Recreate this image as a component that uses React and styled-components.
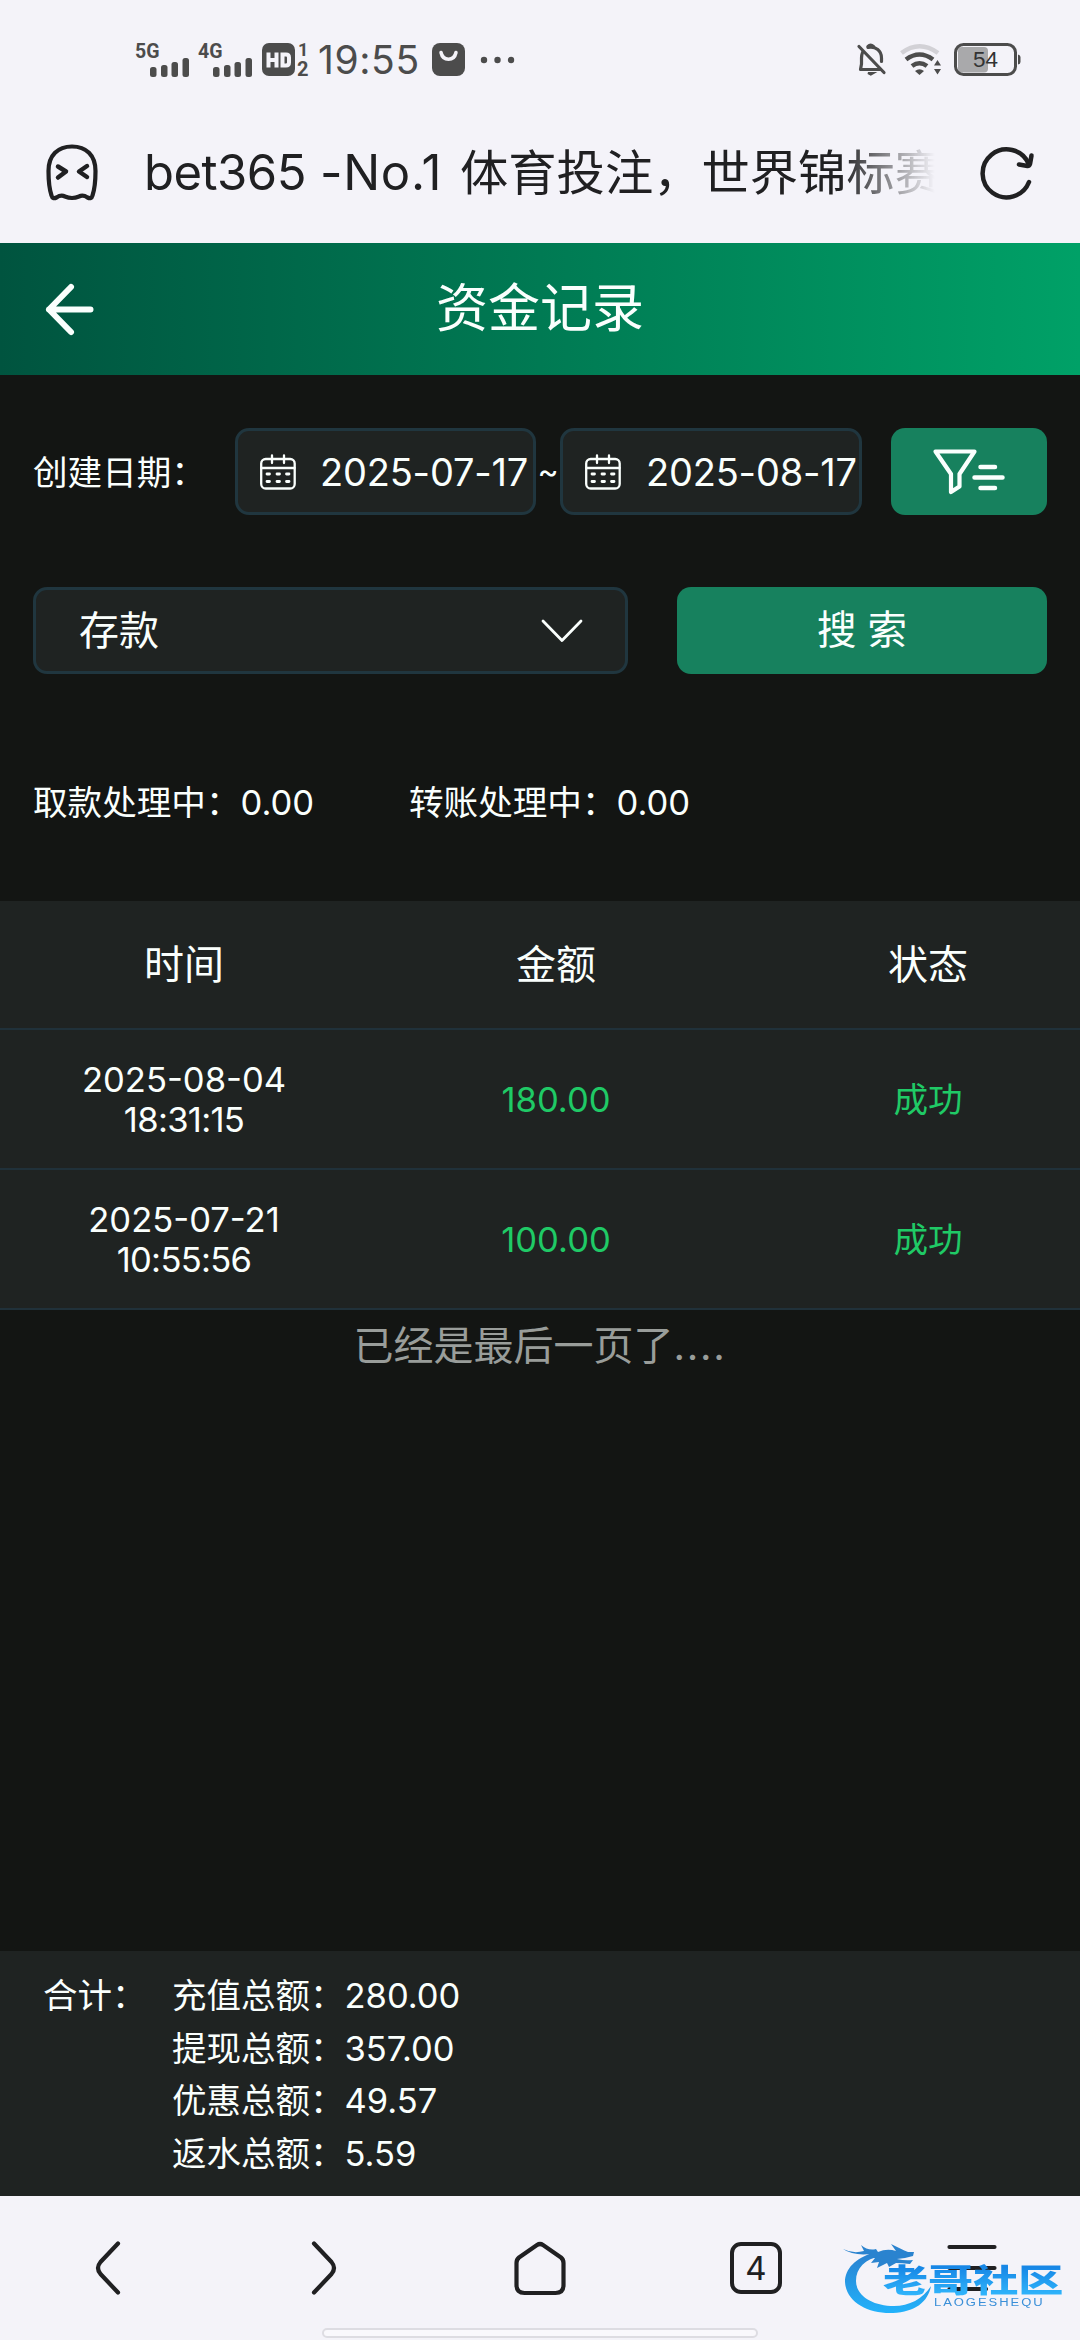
import React from 'react'
import styled, { createGlobalStyle } from 'styled-components'

const records = [
  { date: '2025-08-04', time: '18:31:15', amount: '180.00', status: '成功' },
  { date: '2025-07-21', time: '10:55:56', amount: '100.00', status: '成功' },
]

const totals = [
  { label: '充值总额：', value: '280.00' },
  { label: '提现总额：', value: '357.00' },
  { label: '优惠总额：', value: '49.57' },
  { label: '返水总额：', value: '5.59' },
]

const GlobalStyle = createGlobalStyle`
  * {
    box-sizing: border-box;
  }
  body {
    margin: 0;
    background: #131513;
    font-family: Inter, "Noto Sans CJK SC", sans-serif;
  }
  svg {
    display: block;
    flex: none;
    overflow: visible;
  }
`

const Page = styled.div`
  position: relative;
  width: 1080px;
  height: 2340px;
  display: flex;
  flex-direction: column;
  overflow: hidden;
  background: #131513;
  color: #fafffd;
  white-space: nowrap;
`

const StatusBar = styled.div`
  flex: none;
  height: 119px;
  padding: 0 59px 0 136px;
  display: flex;
  align-items: center;
  justify-content: space-between;
  background: #f4f3f9;
  color: #4c4c4c;
`

const StatusGroup = styled.div`
  display: flex;
  align-items: center;
  gap: ${(props) => props.$gap || 0}px;
`

const Clock = styled.div`
  width: 104px;
  margin: 0 10px 0 9px;
  font-size: 39px;
  line-height: 40px;
  letter-spacing: 0.6px;
`

const AddressBar = styled.div`
  flex: none;
  height: 124px;
  padding: 0 47px 16px 45px;
  display: flex;
  align-items: center;
  background: #f4f3f9;
  color: #202022;
`

const SiteTitle = styled.div`
  flex: none;
  width: 791px;
  margin: 0 45px;
  display: flex;
  overflow: hidden;
  font-size: 48.3px;
  line-height: 70px;
  mask-image: linear-gradient(90deg, #000 88%, transparent 100%);
`

const Latin = styled.span`
  flex: none;
  width: ${(props) => props.$width}px;
  font-size: 49px;
  letter-spacing: ${(props) => props.$spacing}px;
`

const Header = styled.div`
  flex: none;
  height: 132px;
  padding: 0 44px;
  display: grid;
  grid-template-columns: 52px 1fr 52px;
  align-items: center;
  background: linear-gradient(90deg, #00543f 0%, #007a53 50%, #00a167 100%);
`

const HeaderTitle = styled.div`
  text-align: center;
  font-size: 52px;
  line-height: 70px;
`

const Filters = styled.div`
  flex: none;
  padding: 53px 33px 0;
  display: flex;
  flex-direction: column;
  gap: 72px;
`

const FilterRow = styled.div`
  display: flex;
  align-items: center;
`

const Label = styled.div`
  width: ${(props) => props.$width}px;
  font-size: 34.6px;
  line-height: 50px;
`

const Field = styled.div`
  width: ${(props) => props.$width}px;
  height: 87px;
  padding: 0 ${(props) => props.$right || 0}px 0 ${(props) => props.$left}px;
  display: flex;
  align-items: center;
  justify-content: space-between;
  border: 3px solid #20363f;
  border-radius: 14px;
  background: #1f2322;
  font-size: 40px;
  line-height: 56px;
`

const DateText = styled.div`
  width: 213px;
  font-size: 38px;
  letter-spacing: -0.2px;
`

const Tilde = styled.div`
  width: 24px;
  text-align: center;
  font-size: 32px;
`

const Button = styled.button`
  width: ${(props) => props.$width}px;
  height: 87px;
  margin: 0 0 0 auto;
  padding: 0;
  display: flex;
  align-items: center;
  justify-content: center;
  border: 0;
  border-radius: 14px;
  background: #17815e;
  color: inherit;
  font-family: inherit;
  font-size: 39.5px;
  line-height: 56px;

  span {
    padding-bottom: 2px;
  }
`

const Pending = styled.div`
  flex: none;
  height: 227px;
  padding: 103px 33px 0;
  display: flex;
  font-size: 34.6px;
  line-height: 50px;

  div {
    width: 376px;
  }
`

const TableRow = styled.div`
  flex: none;
  height: ${(props) => props.$height}px;
  padding-left: 32px;
  display: flex;
  align-items: center;
  justify-content: space-between;
  border-bottom: 2px solid #20313a;
  background: #1f2322;
`

const HeadCell = styled.div`
  width: 304px;
  text-align: center;
  font-size: 40px;
  line-height: 56px;
`

const Cell = styled.div`
  width: 304px;
  text-align: center;
  color: ${(props) => (props.$green ? '#1fca66' : 'inherit')};
  font-size: 34.6px;
  line-height: 40px;
`

const Time = styled.div`
  letter-spacing: -0.7px;
`

const EndNote = styled.div`
  flex: 1;
  padding-top: 7px;
  text-align: center;
  color: #999d9a;
  font-size: 40px;
  line-height: 58px;

  span {
    letter-spacing: 1.7px;
  }
`

const Footer = styled.div`
  flex: none;
  height: 245px;
  padding: 19px 43px;
  display: flex;
  background: #1f2322;
  font-size: 34.5px;
  line-height: 52.7px;
`

const FooterLabel = styled.div`
  width: 129px;
`

const TotalRow = styled.div`
  height: 52.7px;
  display: flex;
`

const NavBar = styled.div`
  flex: none;
  height: 144px;
  display: flex;
  flex-direction: column;
  background: #f4f3f9;
  color: #202022;
`

const NavItems = styled.div`
  height: 132px;
  padding-top: 12px;
  display: grid;
  grid-template-columns: repeat(5, 1fr);
  align-items: center;
  justify-items: center;
`

const TabCount = styled.div`
  width: 52px;
  height: 52px;
  display: flex;
  align-items: center;
  justify-content: center;
  border: 4px solid #202022;
  border-radius: 11px;
  font-size: 33px;
`

const HomeIndicator = styled.div`
  width: 436px;
  height: 10px;
  margin: 0 auto;
  border: 2px solid #dddce2;
  border-radius: 5px;
  background: #f9f8fc;
`

const Watermark = styled.div`
  position: absolute;
  left: 841px;
  top: 2234px;
  width: 226px;
  height: 84px;
`

const WatermarkName = styled.div`
  position: absolute;
  left: 42px;
  top: 30px;
  font-size: 32px;
  font-weight: 900;
  line-height: 34px;
  transform: scaleX(1.41);
  transform-origin: 0 0;
  background: linear-gradient(#1787e6 10%, #2fb4fb 90%);
  background-clip: text;
  color: transparent;
`

const WatermarkSub = styled.div`
  position: absolute;
  left: 93px;
  top: 62px;
  font-family: "Liberation Sans", sans-serif;
  font-size: 10px;
  letter-spacing: 1.5px;
  line-height: 13px;
  transform: scaleX(1.3);
  transform-origin: 0 0;
  color: #3a8fd8;
`

const Signal = ({ label }) => (
  <svg width="63" height="34" viewBox="0 0 63 34" fill="currentColor">
    <text x="-1" y="14.500" fontFamily="Roboto, sans-serif" fontSize="19.5" fontWeight="700">{label}</text>
    <rect x="14" y="24" width="6.5" height="10" rx="2.5" />
    <rect x="25" y="22" width="6.5" height="12" rx="2.5" />
    <rect x="35.5" y="19" width="6.5" height="15" rx="2.5" />
    <rect x="46.5" y="15" width="6.5" height="19" rx="2.5" />
  </svg>
)

const HdIcon = () => (
  <svg width="47" height="34" viewBox="0 0 47 34" fill="currentColor">
    <rect width="33" height="33" rx="7" />
    <path d="M6.500 9.500V24.500M14.500 9.500V24.500M6.500 17H14.500M20.500 11.500V22.500H24Q27 22.500 27 19.500V14.500Q27 11.500 24 11.500Z" fill="none" stroke="#f4f3f9" strokeWidth="4" />
    <text x="36" y="13" fontFamily="Roboto, sans-serif" fontSize="18" fontWeight="700">1</text>
    <text x="35" y="32.500" fontFamily="Roboto, sans-serif" fontSize="20" fontWeight="700">2</text>
  </svg>
)

const BagIcon = () => (
  <svg width="80" height="33" viewBox="0 0 80 33" fill="currentColor">
    <rect width="33" height="33" rx="8" />
    <path d="M9 9.500C11 18.500 22 18.500 24 9.500" fill="none" stroke="#f4f3f9" strokeWidth="3.500" strokeLinecap="round" />
    <circle cx="52" cy="17" r="3.200" />
    <circle cx="65.500" cy="17" r="3.200" />
    <circle cx="79" cy="17" r="3.200" />
  </svg>
)

const BellOffIcon = () => (
  <svg width="30" height="34" viewBox="0 0 30 34" fill="none" stroke="currentColor" strokeWidth="3.200" strokeLinecap="round">
    <path d="M2 3.500L27 29.500" />
    <path d="M5.500 9.500Q4.500 12 4.500 15V21L3.500 26.500H23" strokeLinejoin="round" />
    <path d="M11 4.500C19 3 24.500 8 24.500 15V18.500" />
    <path d="M11 3.500Q13.500 1 16.500 3.500" />
    <path d="M11 30H16.500L13.800 31.500Z" fill="currentColor" strokeWidth="2" />
  </svg>
)

const WifiIcon = () => (
  <svg width="42" height="32" viewBox="0 0 42 32" fill="none" stroke="currentColor" strokeWidth="4.600">
    <path d="M1.500 9Q19.500 -4.500 38 9" stroke="#d2d1d6" />
    <path d="M6 15.500Q19.500 5.500 33 15.500" />
    <path d="M12 22Q19.500 16.500 27 22" />
    <path d="M15 27Q19.500 23.500 24 27L19.500 31Z" fill="currentColor" stroke="none" />
    <path d="M34 21.500L37.500 16L41 21.500ZM34 25L37.500 30.500L41 25Z" fill="currentColor" stroke="none" />
  </svg>
)

const BatteryIcon = () => (
  <svg width="67" height="34" viewBox="0 0 67 34">
    <rect x="4" y="4" width="30" height="25.500" rx="4" fill="#a9a9ab" />
    <rect x="1.500" y="1.500" width="60" height="30" rx="8" fill="none" stroke="currentColor" strokeWidth="3" />
    <path d="M64 11.500Q66.500 12 66.500 14V19Q66.500 21 64 21.500Z" fill="currentColor" />
    <text x="31.500" y="23.500" textAnchor="middle" fontFamily="Liberation Sans, sans-serif" fontSize="22.500" fill="#333">54</text>
  </svg>
)

const GhostIcon = () => (
  <svg width="54" height="58" viewBox="0 0 54 58" fill="none" stroke="currentColor" strokeWidth="4.200" strokeLinecap="round" strokeLinejoin="round">
    <path d="M3.500 27C3.500 11 13 2.500 27 2.500S50.500 11 50.500 27C50.500 38 50 44 47.500 51.500Q46.500 55.500 42.500 53.500Q38 50.500 34 52.500Q27 55.500 20 52.500Q16 50.500 11.500 53.500Q7.500 55.500 6.500 51.500C4 44 3.500 38 3.500 27Z" />
    <path d="M13 22.500L21 27.500L13 33.500M42 22L34 27.500L42 33" strokeWidth="4.500" />
  </svg>
)

const ReloadIcon = () => (
  <svg width="54" height="54" viewBox="0 0 54 54" fill="none" stroke="currentColor" strokeWidth="4.500" strokeLinecap="round" strokeLinejoin="round">
    <path d="M49 36A24 24 0 1 1 48.500 17.500" />
    <path d="M39 18.500L47.500 20Q49.500 20 50 18L51.500 9.500" />
  </svg>
)

const BackIcon = () => (
  <svg width="52" height="52" viewBox="0 0 52 52" fill="none" stroke="currentColor" strokeWidth="6" strokeLinecap="round" strokeLinejoin="round">
    <path d="M27 4L5 26.500L27 49M5 26.500H46.500" />
  </svg>
)

const CalendarIcon = () => (
  <svg width="36" height="36" viewBox="0 0 36 36" fill="none" stroke="currentColor" strokeWidth="2.300" strokeLinecap="round">
    <rect x="1.200" y="5" width="33.500" height="29.500" rx="4.500" />
    <path d="M1.500 14H34.500M12 1.500V9M24 1.500V9" />
    <path d="M7 20H9.500M17 20H19.500M26.500 20H29M7 27.500H9.500M17 27.500H19.500M26.500 27.500H29" strokeWidth="2.800" />
  </svg>
)

const FilterIcon = () => (
  <svg width="73" height="46" viewBox="0 0 73 46" fill="none" stroke="currentColor" strokeWidth="4.200" strokeLinecap="round" strokeLinejoin="round">
    <path d="M2.500 2.500H41.500L26.500 25V37.500L18 43V25Z" />
    <path d="M47.500 18H62M41.500 28.500H69.500M47.500 39H62" strokeWidth="4.500" />
  </svg>
)

const ChevronDownIcon = () => (
  <svg width="42" height="24" viewBox="0 0 42 24" fill="none" stroke="currentColor" strokeWidth="2.800" strokeLinecap="round" strokeLinejoin="round">
    <path d="M2 2L21 21.500L40 2" />
  </svg>
)

const NavIcon = ({ d }) => (
  <svg width="56" height="56" viewBox="0 0 56 56" fill="none" stroke="currentColor" strokeWidth="4.200" strokeLinecap="round" strokeLinejoin="round">
    <path d={d} />
  </svg>
)

const DragonIcon = () => (
  <svg width="120" height="84" viewBox="0 0 120 84">
    <defs>
      <linearGradient id="dragon" x1="0" y1="0" x2="0" y2="1">
        <stop offset="0" stopColor="#2a80cf" />
        <stop offset="1" stopColor="#22b2fb" />
      </linearGradient>
    </defs>
    <path d="M34 18C14 24 4 35 4 48C5 68 27 80 52 79C74 78 87 68 90 52C82 65 68 72 53 72C32 72 15 62 15 47C15 34 24 25 40 22Z" fill="url(#dragon)" />
    <path d="M2 15Q12 20 23 17L20 11Q27 17 35 15L37 18Q46 14 55 17L50 10Q60 15 67 18H73L72 22L64 24L56 25Q64 27 72 26L69 30Q61 29 55 29L48 33L46 29L36 34L38 28L30 29L34 24L27 24L30 20Q12 22 2 15Z" fill="#2a83cf" />
  </svg>
)

export default function App() {
  return (
    <Page lang="zh-CN">
      <GlobalStyle />
      <StatusBar>
        <StatusGroup>
          <Signal label="5G" />
          <Signal label="4G" />
          <HdIcon />
          <Clock>19:55</Clock>
          <BagIcon />
        </StatusGroup>
        <StatusGroup $gap={12.5}>
          <BellOffIcon />
          <WifiIcon />
          <BatteryIcon />
        </StatusGroup>
      </StatusBar>

      <AddressBar>
        <GhostIcon />
        <SiteTitle>
          <Latin $width={176} $spacing={-0.5}>bet365</Latin>
          <Latin $width={140} $spacing={0.7}>-No.1</Latin>
          体育投注，世界锦标赛
        </SiteTitle>
        <ReloadIcon />
      </AddressBar>

      <Header>
        <BackIcon />
        <HeaderTitle>资金记录</HeaderTitle>
      </Header>

      <Filters>
        <FilterRow>
          <Label $width={202}>创建日期：</Label>
          <Field $width={301} $left={22}>
            <CalendarIcon />
            <DateText>2025-07-17</DateText>
          </Field>
          <Tilde>~</Tilde>
          <Field $width={302} $left={22}>
            <CalendarIcon />
            <DateText>2025-08-17</DateText>
          </Field>
          <Button $width={156}>
            <FilterIcon />
          </Button>
        </FilterRow>
        <FilterRow>
          <Field $width={595} $left={43} $right={42}>
            存款
            <ChevronDownIcon />
          </Field>
          <Button $width={370}>
            <span>搜 索</span>
          </Button>
        </FilterRow>
      </Filters>

      <Pending>
        <div>取款处理中：0.00</div>
        <div>转账处理中：0.00</div>
      </Pending>

      <TableRow $height={129}>
        <HeadCell>时间</HeadCell>
        <HeadCell>金额</HeadCell>
        <HeadCell>状态</HeadCell>
      </TableRow>
      {records.map((record) => (
        <TableRow $height={140} key={record.date}>
          <Cell>
            {record.date}
            <Time>{record.time}</Time>
          </Cell>
          <Cell $green>{record.amount}</Cell>
          <Cell $green>{record.status}</Cell>
        </TableRow>
      ))}
      <EndNote>
        已经是最后一页了<span>....</span>
      </EndNote>

      <Footer>
        <FooterLabel>合计：</FooterLabel>
        <div>
          {totals.map((total) => (
            <TotalRow key={total.label}>
              <div>{total.label}</div>
              <div>{total.value}</div>
            </TotalRow>
          ))}
        </div>
      </Footer>

      <NavBar>
        <NavItems>
          <NavIcon d="M38 3.500L20.500 22Q15.500 28 20.500 34L38 52.500" />
          <NavIcon d="M18 3.500L35.500 22Q40.500 28 35.500 34L18 52.500" />
          <NavIcon d="M25 5Q28 3 31 5L49 17.500Q51.500 19.500 51.500 23V45Q51.500 53 43.500 53H12.500Q4.500 53 4.500 45V23Q4.500 19.500 7 17.500Z" />
          <TabCount>4</TabCount>
          <NavIcon d="M5.500 7H50.500M5.500 28H50.500M5.500 49H42" />
        </NavItems>
        <HomeIndicator />
      </NavBar>

      <Watermark>
        <DragonIcon />
        <WatermarkName>老哥社区</WatermarkName>
        <WatermarkSub>LAOGESHEQU</WatermarkSub>
      </Watermark>
    </Page>
  )
}
